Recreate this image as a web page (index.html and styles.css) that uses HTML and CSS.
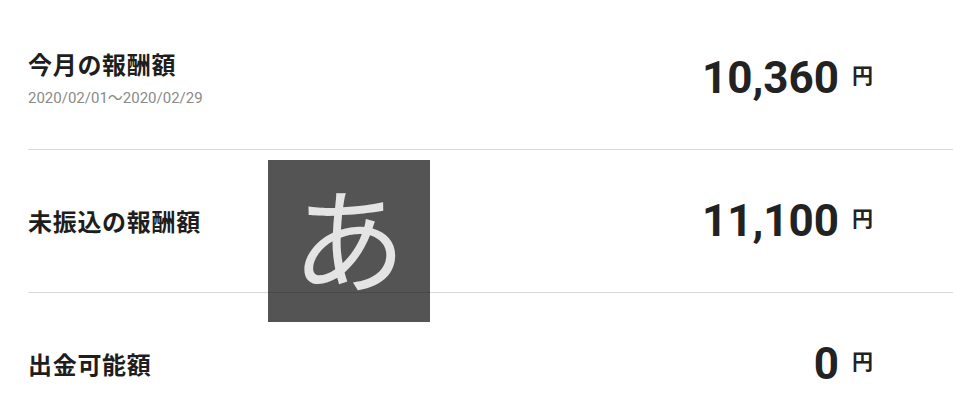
FILE: index.html
```html
<!DOCTYPE html>
<html lang="ja">
<head>
<meta charset="utf-8">
<link rel="stylesheet" href="styles.css">
</head>
<body>
<div class="list">
  <div class="row">
    <div class="label-block">
      <div class="label">今月の報酬額</div>
      <div class="period">2020/02/01～2020/02/29</div>
    </div>
    <div class="amount"><span class="num">10,360</span><span class="yen">円</span></div>
  </div>
  <div class="row">
    <div class="label-block">
      <div class="label">未振込の報酬額</div>
    </div>
    <div class="amount"><span class="num">11,100</span><span class="yen">円</span></div>
  </div>
  <div class="row">
    <div class="label-block">
      <div class="label">出金可能額</div>
    </div>
    <div class="amount"><span class="num">0</span><span class="yen">円</span></div>
  </div>
</div>
<div class="ime-badge">あ</div>
</body>
</html>
```

FILE: styles.css
```css
html, body {
  margin: 0;
  padding: 0;
  background: #fff;
}
body {
  font-family: Roboto, "Noto Sans CJK JP", sans-serif;
  color: #222;
  overflow: hidden;
}
.list {
  padding-left: 28px;
  padding-top: 7px;
}
.row {
  display: flex;
  align-items: center;
  justify-content: space-between;
  height: 142px;
  padding-right: 80px;
  border-bottom: 1px solid #d9d9d9;
}
.row:last-child {
  border-bottom: none;
}
.label {
  font-family: "Noto Sans CJK JP", sans-serif;
  font-weight: 700;
  font-size: 24px;
  letter-spacing: 0.7px;
  line-height: 30px;
  color: #1e1e1e;
}
.period {
  font-family: Roboto, "Noto Sans CJK JP", sans-serif;
  font-size: 15px;
  color: #8a8a8a;
  line-height: 20px;
  margin-top: 9px;
}
.amount {
  display: flex;
  align-items: baseline;
  gap: 13px;
}
.num {
  font-family: Roboto, sans-serif;
  font-weight: 700;
  font-size: 44px;
  line-height: 50px;
  color: #222;
}
.yen {
  font-family: "Noto Sans CJK JP", sans-serif;
  font-weight: 700;
  font-size: 21px;
  color: #222;
  position: relative;
  top: -10px;
}
.ime-badge {
  position: absolute;
  left: 268px;
  top: 160px;
  width: 162px;
  height: 162px;
  background: rgba(0, 0, 0, 0.67);
  color: #e4e4e4;
  font-family: "Noto Sans CJK JP", sans-serif;
  font-size: 114px;
  line-height: 150px;
  text-align: center;
}
```
